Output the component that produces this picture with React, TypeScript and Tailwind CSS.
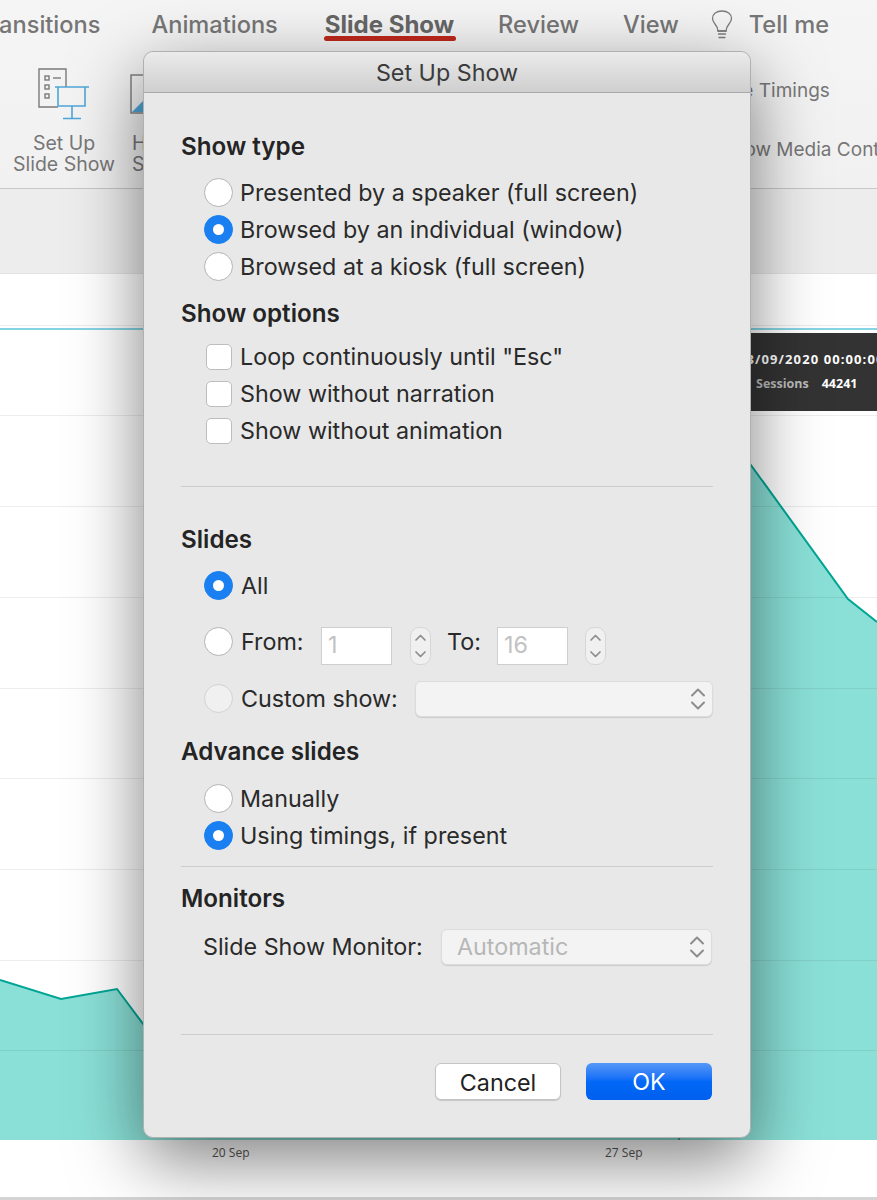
import React from 'react';

const Radio = ({ on, disabled }: { on?: boolean; disabled?: boolean }) => (
  <span
    className={`flex h-[29px] w-[29px] shrink-0 items-center justify-center rounded-full border ${
      on ? 'border-[#1a7ff0] bg-[#1a7ff0]' : disabled ? 'border-[#d2d2d2] bg-[#f0f0f0]' : 'border-[#b4b4b4] bg-white'
    }`}
  >
    {on && <span className="h-[11px] w-[11px] rounded-full bg-white" />}
  </span>
);

const RadioRow = ({ label, on }: { label: string; on?: boolean }) => (
  <div className="ml-[24px] flex h-[37px] items-center gap-[7px]">
    <Radio on={on} />
    <span className="pt-[2px]">{label}</span>
  </div>
);

const CheckRow = ({ label }: { label: string }) => (
  <div className="ml-[26px] flex h-[37px] items-center gap-[8px]">
    <span className="h-[26px] w-[26px] shrink-0 rounded-[5px] border border-[#bdbdbd] bg-white" />
    <span className="pt-[2px]">{label}</span>
  </div>
);

const Heading = ({ children, className }: { children: React.ReactNode; className: string }) => (
  <div className={`flex h-[30px] items-center pl-[1px] pt-[2px] text-[24.2px] font-semibold text-[#242424] ${className}`}>{children}</div>
);

const Divider = ({ className }: { className: string }) => <div className={`ml-[1px] h-px bg-[#cdcdcd] ${className}`} />;

const UpDown = ({ w = 16, color = '#8d8d8d' }: { w?: number; color?: string }) => (
  <svg width={w} height="26" viewBox="0 0 16 26" fill="none" stroke={color} strokeWidth="2" strokeLinecap="round" strokeLinejoin="round">
    <path d="M2 9.5 8 3.5l6 6" />
    <path d="M2 16.5l6 6 6-6" />
  </svg>
);

const Stepper = () => (
  <span className="mt-[8px] flex h-[38px] w-[21px] items-center justify-center rounded-[9px] border border-[#d6d6d6] bg-[#f0f0f0]">
    <svg width="13" height="28" viewBox="0 0 13 28" fill="none" stroke="#8d8d8d" strokeWidth="1.7" strokeLinecap="round" strokeLinejoin="round">
      <path d="M2 8l4.5-4.5L11 8" />
      <path d="M2 20l4.5 4.5L11 20" />
    </svg>
  </span>
);

const NumberBox = ({ value }: { value: string }) => (
  <span className="mt-[8px] flex h-[38px] w-[71px] items-end border border-[#cfcfcf] bg-white pb-[1px] pl-[6px] text-[#c2c2c2]">{value}</span>
);

const Dropdown = ({ text, className }: { text?: string; className: string }) => (
  <span className={`flex h-[36px] items-center justify-between rounded-[6px] border border-[#dcdcdc] bg-[#f3f3f3] pl-[15px] pr-[6px] text-[#b7b7b7] shadow-[0_1px_1px_rgba(0,0,0,0.12)] ${className}`}>
    <span className="pt-[2px]">{text}</span>
    <UpDown />
  </span>
);

const SetUpIcon = () => (
  <svg width="52" height="52" viewBox="0 0 52 52" fill="none">
    <g stroke="#7a7a7a" strokeWidth="1.4">
      <path d="M28 19V1H1v38h19" />
      <rect x="7" y="8" width="4" height="4" />
      <rect x="7" y="17" width="4" height="4" />
      <rect x="7" y="26" width="4" height="4" />
      <path d="M15 10h8" />
    </g>
    <g stroke="#4ea6d8" strokeWidth="1.6">
      <path d="M17 19h34" />
      <path d="M20 19v19h27V19" />
      <path d="M34 38v13M25 50.500h18" />
    </g>
  </svg>
);

const HideIcon = () => (
  <svg width="34" height="40" viewBox="0 0 34 40" fill="none">
    <rect x="1" y="1" width="32" height="38" stroke="#7a7a7a" strokeWidth="1.4" />
    <path d="M2 38l12-12 12 12z" fill="#4ea6d8" />
  </svg>
);

const Bulb = () => (
  <svg width="22" height="29" viewBox="0 0 22 29" fill="none" stroke="#7c7c7c" strokeWidth="1.3" strokeLinecap="round">
    <path d="M7 21c0-3-1-4.500-3-7C2.500 12 1.500 10.500 1.500 8.500 1.500 4 5.500 1 11 1s9.500 3 9.500 7.500c0 2-1 3.500-2.500 5.500-2 2.500-3 4-3 7z" />
    <path d="M7 21h8M7.500 24h7M8 27.500h6" />
  </svg>
);

const Tab = ({ children, active, className }: { children: React.ReactNode; active?: boolean; className?: string }) => (
  <div className={`relative ${className ?? ''}`}>
    <span className={active ? 'text-[24px] font-bold text-[#666]' : ''}>{children}</span>
    {active && <span className="absolute -left-px -right-[2px] top-[29px] h-[5px] rounded-full bg-[#c0281c]" />}
  </div>
);

const grid = [325, 415, 506, 597, 688, 778, 869, 960, 1050];
const curve = 'M0 980L61 999L117 989L170 1060L400 900L600 600L700 380L748 461L848 599L877 622';

const Chart = () => (
  <svg width="877" height="866" viewBox="0 274 877 866" className="block">
    <rect x="0" y="274" width="877" height="866" fill="#ffffff" />
    <path d={`${curve}V1140H0Z`} fill="#8ae0d7" />
    {grid.map(y => (
      <line key={y} x1="0" x2="877" y1={y + 0.5} y2={y + 0.5} stroke="#000000" strokeOpacity="0.07" strokeWidth="1" />
    ))}
    <line x1="0" x2="877" y1="329" y2="329" stroke="#5cc6dc" strokeWidth="1.5" />
    <path d={curve} fill="none" stroke="#00a594" strokeWidth="2" />
    <line x1="679" x2="679" y1="1130" y2="1140" stroke="#444444" strokeWidth="1" />
  </svg>
);

export default function App() {
  return (
    <div className="relative h-[1200px] w-[877px] overflow-hidden bg-white font-['Inter',sans-serif] text-[23.3px] text-[#2a2a2a]">
      {/* ribbon */}
      <div className="h-[189px] border-b border-[#c6c6c6] bg-gradient-to-b from-[#f5f5f5] to-[#f1f1f1]">
        <div className="-ml-[24px] flex h-[50px] items-center gap-[46px] text-[23.6px] font-medium text-[#767676]">
          <Tab>Transitions</Tab>
          <Tab className="ml-[5px]">Animations</Tab>
          <Tab active className="ml-[1px]">Slide Show</Tab>
          <Tab className="-ml-[2px]">Review</Tab>
          <Tab className="-ml-[2px]">View</Tab>
          <div className="-ml-[14px] flex items-center gap-[16px]">
            <Bulb />
            <span>Tell me</span>
          </div>
        </div>
        <div className="flex text-[19.5px] leading-[21px] text-[#777]">
          <div className="ml-[13px] flex w-[102px] shrink-0 flex-col items-center">
            <div className="mt-[18px]"><SetUpIcon /></div>
            <div className="mt-[13px] whitespace-nowrap text-center">Set Up<br />Slide Show</div>
          </div>
          <div className="ml-[15px] flex w-[100px] shrink-0 flex-col">
            <div className="mt-[24px]"><HideIcon /></div>
            <div className="ml-[2px] mt-[19px]">Hide<br />Slide</div>
          </div>
          <div className="ml-[436px] w-[250px] shrink-0 text-[19px]">
            <div className="ml-[3px] mt-[30px] whitespace-nowrap">Rehearse Timings</div>
            <div className="ml-[55px] mt-[38px] whitespace-nowrap">Show Media Controls</div>
          </div>
        </div>
      </div>
      <div className="h-[84px] bg-[#ededed]" />
      <div className="h-px bg-[#e4e4e4]" />

      {/* chart */}
      <div className="relative">
        <Chart />
        <div className="absolute left-[640px] right-0 top-[59px] h-[78px] overflow-hidden whitespace-nowrap bg-[#333] pl-[98px] pt-[17px] font-['Open_Sans',sans-serif] text-[13px] font-bold text-white">
          <div className="tracking-[1.1px]">13/09/2020 00:00:00</div>
          <div className="mt-[5px] flex gap-[13px] pl-[18px] text-[12.5px]">
            <span className="text-[#bbb]">Sessions</span>
            <span>44241</span>
          </div>
        </div>
      </div>
      <div className="flex h-[57px] pl-[212px] pt-[4px] font-['Open_Sans',sans-serif] text-[12px] text-[#555]">
        <span className="w-[393px]">20 Sep</span>
        <span>27 Sep</span>
      </div>
      <div className="h-[3px] bg-[#d4d4d4]" />

      {/* Set Up Show dialog */}
      <div className="absolute left-[143px] top-[51px] h-[1087px] w-[608px] rounded-[10px] border border-[#b0b0b0] bg-[#e8e8e8] shadow-[0_22px_70px_rgba(0,0,0,0.5)]">
        <div className="flex h-[41px] items-center justify-center rounded-t-[10px] border-b border-[#a9a9a9] bg-gradient-to-b from-[#ebebeb] to-[#cfcfcf] pt-[2px] text-[23.3px] text-[#3b3b3b]">
          Set Up Show
        </div>
        <div className="pl-[36px] pr-[37px]">
          <Heading className="mt-[38px]">Show type</Heading>
          <div className="mt-[13px]">
            <RadioRow label="Presented by a speaker (full screen)" />
            <RadioRow label="Browsed by an individual (window)" on />
            <RadioRow label="Browsed at a kiosk (full screen)" />
          </div>
          <Heading className="mt-[13px]">Show options</Heading>
          <div className="mt-[10px]">
            <CheckRow label={'Loop continuously until "Esc"'} />
            <CheckRow label="Show without narration" />
            <CheckRow label="Show without animation" />
          </div>
          <Divider className="mt-[37px]" />
          <Heading className="mt-[37px]">Slides</Heading>
          <div className="ml-[24px] mt-[13px] flex h-[37px] items-center gap-[8px]">
            <Radio on />
            <span className="pt-[2px]">All</span>
          </div>
          <div className="ml-[24px] mt-[19px] flex h-[37px] items-center">
            <Radio />
            <span className="ml-[8px] w-[80px] pt-[2px]">From:</span>
            <NumberBox value="1" />
            <span className="ml-[18px]"><Stepper /></span>
            <span className="ml-[16px] w-[50px] pt-[2px]">To:</span>
            <NumberBox value="16" />
            <span className="ml-[17px]"><Stepper /></span>
          </div>
          <div className="ml-[24px] mt-[20px] flex h-[37px] items-center">
            <Radio disabled />
            <span className="ml-[8px] w-[174px] pt-[2px]">Custom show:</span>
            <Dropdown className="w-[298px]" />
          </div>
          <Heading className="mt-[19px]">Advance slides</Heading>
          <div className="mt-[14px]">
            <RadioRow label="Manually" />
            <RadioRow label="Using timings, if present" on />
          </div>
          <Divider className="mt-[12px]" />
          <Heading className="mt-[16px]">Monitors</Heading>
          <div className="ml-[23px] mt-[15px] flex h-[37px] items-center">
            <span className="w-[238px] pt-[2px]">Slide Show Monitor:</span>
            <Dropdown text="Automatic" className="w-[271px]" />
          </div>
          <Divider className="mt-[69px]" />
          <div className="mt-[28px] flex justify-end gap-[25px] pr-[1px]">
            <button className="h-[37px] w-[126px] rounded-[6px] border border-[#c4c4c4] bg-white pt-[2px] text-[#222] shadow-[0_1px_1px_rgba(0,0,0,0.15)]">Cancel</button>
            <button className="h-[37px] w-[126px] rounded-[6px] bg-gradient-to-b from-[#5498f6] via-[#0268f7] to-[#005fee] pt-[2px] text-white">OK</button>
          </div>
        </div>
      </div>
    </div>
  );
}
